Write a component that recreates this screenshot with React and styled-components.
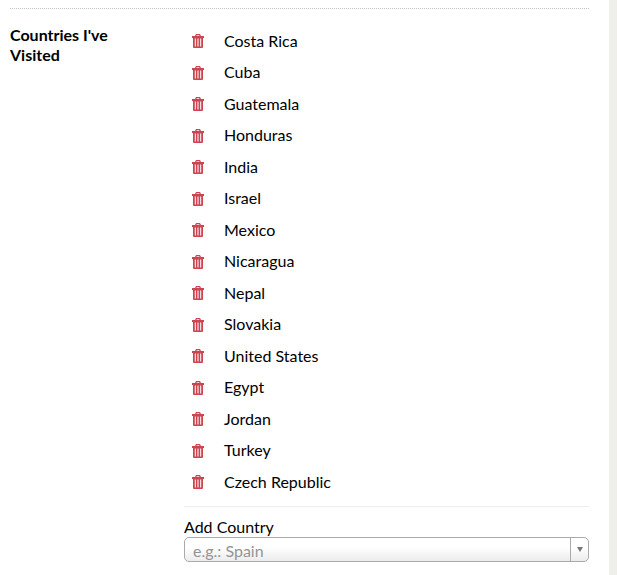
import React from 'react'
import styled, { createGlobalStyle } from 'styled-components'

const GlobalStyle = createGlobalStyle`
  html, body {
    margin: 0;
    padding: 0;
    height: 575px;
    overflow: hidden;
    background: #efeee9;
  }
`

const Page = styled.div`
  width: 609px;
  height: 575px;
  box-sizing: border-box;
  padding: 8px 20px 0 10px;
  background: #fff;
  font-family: Lato, sans-serif;
  font-size: 16px;
  color: #000;
  overflow: hidden;
`

const Section = styled.section`
  display: grid;
  grid-template-columns: 174px 1fr;
  border-top: 1px dotted #c4c4c4;
  padding-top: 15.5px;
`

const Label = styled.h3`
  margin: 0;
  font-size: 16px;
  font-weight: 700;
  line-height: 20px;
`

const List = styled.ul`
  margin: 0;
  padding: 0 0 8.5px;
  list-style: none;
  border-bottom: 1px solid #eeeeea;
`

const Row = styled.li`
  display: flex;
  align-items: center;
  height: 31.5px;
  padding-left: 8px;
`

const Trash = styled.svg`
  width: 12px;
  height: 14px;
  flex: none;
  margin: 2px 20px 0 0;
  color: #cc4652;
`

const AddLabel = styled.label`
  display: block;
  margin-top: 10px;
  line-height: 20px;
`

const Combo = styled.div`
  display: flex;
  height: 25px;
  box-sizing: border-box;
  border: 1px solid #aaa;
  border-radius: 5px;
  background: linear-gradient(#fff 40%, #ececec);
  overflow: hidden;
`

const ComboInput = styled.input`
  flex: 1;
  min-width: 0;
  border: 0;
  padding: 2px 8px 0;
  background: transparent;
  font: inherit;
  outline: none;

  &::placeholder {
    color: #949494;
    opacity: 1;
  }
`

const ComboButton = styled.div`
  width: 17px;
  display: flex;
  align-items: center;
  justify-content: center;
  border-left: 1px solid #aaa;
`

const Caret = styled.span`
  width: 0;
  height: 0;
  margin-top: 1px;
  border-left: 3.5px solid transparent;
  border-right: 3.5px solid transparent;
  border-top: 5px solid #777;
`

const countries = [
  'Costa Rica',
  'Cuba',
  'Guatemala',
  'Honduras',
  'India',
  'Israel',
  'Mexico',
  'Nicaragua',
  'Nepal',
  'Slovakia',
  'United States',
  'Egypt',
  'Jordan',
  'Turkey',
  'Czech Republic',
]

function TrashIcon() {
  return (
    <Trash viewBox="0 0 12 14" aria-hidden="true">
      <path
        fill="currentColor"
        fillRule="evenodd"
        d="M4 0h4l1 2h3v2h-1v9a1 1 0 0 1-1 1H2a1 1 0 0 1-1-1V4H0V2h3zM4.800 1.200 4.500 2h3l-.3-.8zM2.800 4.500v8h1v-8zM5.500 4.500v8h1v-8zM8.200 4.500v8h1v-8z"
      />
    </Trash>
  )
}

export default function App() {
  return (
    <>
      <GlobalStyle />
      <Page>
        <Section>
          <Label>
            Countries I've
            <br />
            Visited
          </Label>
          <div>
            <List>
              {countries.map((name) => (
                <Row key={name}>
                  <TrashIcon />
                  {name}
                </Row>
              ))}
            </List>
            <AddLabel htmlFor="add-country">Add Country</AddLabel>
            <Combo>
              <ComboInput id="add-country" placeholder="e.g.: Spain" />
              <ComboButton>
                <Caret />
              </ComboButton>
            </Combo>
          </div>
        </Section>
      </Page>
    </>
  )
}
